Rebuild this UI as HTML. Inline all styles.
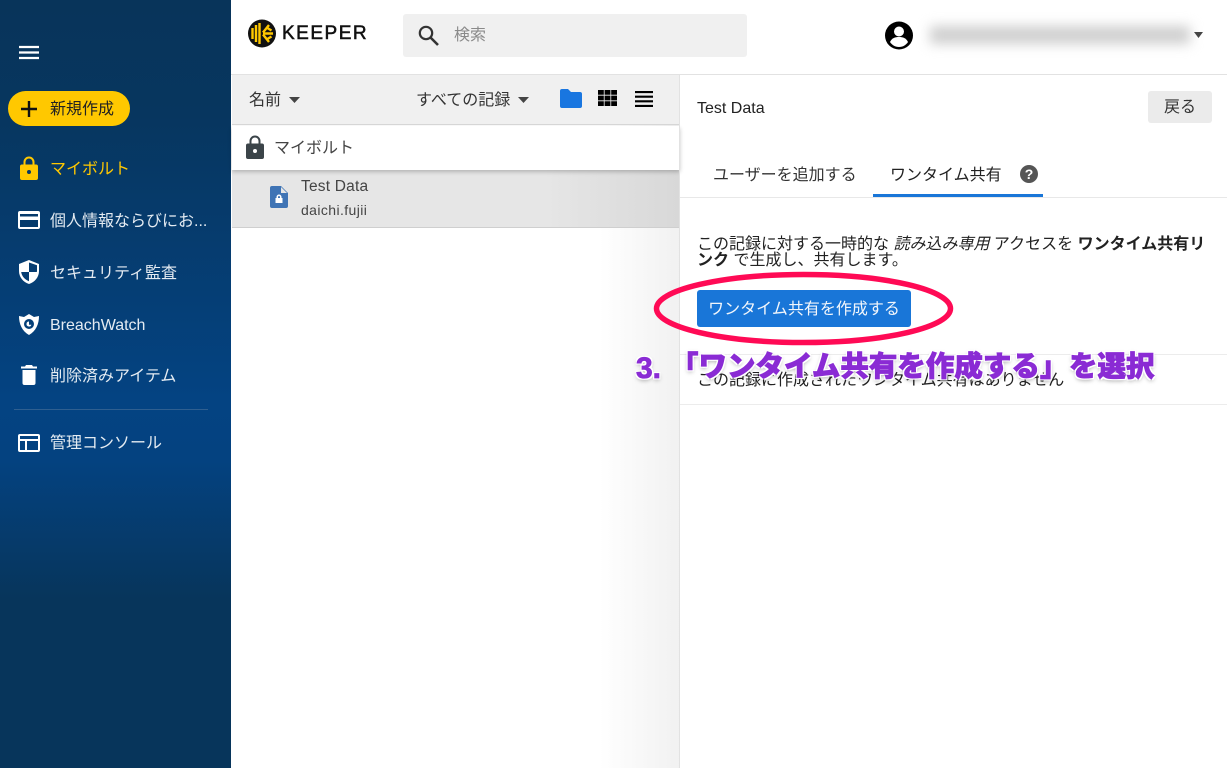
<!DOCTYPE html>
<html lang="ja"><head><meta charset="utf-8"><title>Keeper</title>
<style>
*{box-sizing:border-box}
html,body{margin:0;padding:0;width:1227px;height:768px;overflow:hidden;background:#fff}
body{font-family:"Liberation Sans","Noto Sans CJK JP",sans-serif;position:relative;color:#222}
.a{position:absolute;white-space:nowrap;line-height:1}
svg{position:absolute;display:block}
#side{position:absolute;left:0;top:0;width:231px;height:768px;background:linear-gradient(180deg,#08345a 0,#07365f 15%,#044382 52%,#044280 60%,#07355b 78%,#07355b 100%)}
.nav{color:#e4ebf2;font-size:16px;left:50px}
.ann{font-family:"Liberation Sans","Noto Sans CJK JP",sans-serif;font-weight:900;color:#8a2bd4;font-size:28.500px;-webkit-text-stroke:.8px #8a2bd4;text-shadow:0 0 1px #fff,1.500px 1.500px 0 #fff,-1.500px -1.500px 0 #fff,1.500px -1.500px 0 #fff,-1.500px 1.500px 0 #fff,0 2px 5px rgba(0,0,0,.4)}
</style></head><body>

<div id="side"></div>
<svg style="left:18px;top:45px" width="22" height="15"><path d="M1 2h20M1 7.500h20M1 13h20" stroke="#fff" stroke-width="2.300"/></svg>
<div class="a" style="left:8px;top:91px;width:122px;height:35px;border-radius:18px;background:#ffc800"></div>
<svg style="left:20px;top:100px" width="18" height="18"><path d="M9 1v16M1 9h16" stroke="#111" stroke-width="2.400"/></svg>
<div class="a" style="left:50px;top:102px;font-size:16px;color:#222">新規作成</div>

<svg style="left:20px;top:156px" width="18" height="24" viewBox="0 0 18 24"><path fill="#ffc800" fill-rule="evenodd" d="M3.500 8.500V6a5.500 5.500 0 0 1 11 0v2.500H16a2 2 0 0 1 2 2V22a2 2 0 0 1-2 2H2a2 2 0 0 1-2-2V10.500a2 2 0 0 1 2-2zM5.500 8.500h7V6a3.500 3.500 0 0 0-7 0zM9 14a2 2 0 1 0 0 4 2 2 0 0 0 0-4z"/></svg>
<div class="a nav" style="top:162px;color:#ffc800">マイボルト</div>

<svg style="left:18px;top:211px" width="22" height="18" viewBox="0 0 22 18"><path fill="#fff" fill-rule="evenodd" d="M2 0h18a2 2 0 0 1 2 2v14a2 2 0 0 1-2 2H2a2 2 0 0 1-2-2V2a2 2 0 0 1 2-2zM2 3v2.500h18V3zM2 9v7h18V9z"/></svg>
<div class="a nav" style="top:214px">個人情報ならびにお...</div>

<svg style="left:19px;top:260px" width="20" height="24" viewBox="0 0 20 24"><path fill="#fff" fill-rule="evenodd" d="M10 0l10 4v7c0 6-4 11-10 13C4 22 0 17 0 11V4zM10 2.500V12H2.200c.5 4 3.500 7.500 7.800 9.300V12h7.800c.1-.4.200-.7.200-1V5.300z"/></svg>
<div class="a nav" style="top:266px">セキュリティ監査</div>

<svg style="left:19px;top:313px" width="20" height="22" viewBox="0 0 20 22"><path fill="#fff" fill-rule="evenodd" d="M0 3l5 1 5-3 5 3 5-1c0 8-3 15-10 19C3 18 0 11 0 3zM10 6a5 5 0 1 0 0 10 5 5 0 0 0 0-10z"/><path fill="#fff" d="M10 8.500a2.500 2.500 0 1 0 2.400 3.200H10z"/></svg>
<div class="a nav" style="top:318px">BreachWatch</div>

<svg style="left:21px;top:365px" width="16" height="20" viewBox="0 0 16 20"><path fill="#fff" d="M5 0h6l1 1.500h4v2H0v-2h4zM1.500 5h13v13a2 2 0 0 1-2 2h-9a2 2 0 0 1-2-2z"/></svg>
<div class="a nav" style="top:369px">削除済みアイテム</div>

<div class="a" style="left:14px;top:409px;width:194px;height:1px;background:#2f5f90"></div>

<svg style="left:18px;top:434px" width="22" height="18" viewBox="0 0 22 18"><path fill="none" stroke="#fff" stroke-width="2" d="M2 1h18a1 1 0 0 1 1 1v14a1 1 0 0 1-1 1H2a1 1 0 0 1-1-1V2a1 1 0 0 1 1-1zM1 6h20M8 6v11"/></svg>
<div class="a nav" style="top:436px">管理コンソール</div>

<!-- Header -->
<div class="a" style="left:231px;top:74px;width:996px;height:1px;background:#e2e2e2"></div>
<svg style="left:248px;top:19px" width="28" height="29" viewBox="0 0 28 29"><circle cx="14" cy="14.500" r="14" fill="#111"/><g fill="none" stroke="#ffc800" stroke-width="2.400"><path d="M4.500 9v11M8 6v17M11.500 4v21"/><path d="M15 13.500L21 6M15 15.500l6 7.500M15 14.500h10M18.500 8.500l5 3M18.500 20.500l5-3"/></g></svg>
<div class="a" style="left:282px;top:24px;font-size:19px;letter-spacing:1.500px;color:#111;-webkit-text-stroke:.55px #111">KEEPER</div>
<div class="a" style="left:403px;top:14px;width:344px;height:43px;background:#f0f0f0;border-radius:3px"></div>
<svg style="left:417px;top:24px" width="23" height="23" viewBox="0 0 23 23"><circle cx="9" cy="9" r="6.200" fill="none" stroke="#333" stroke-width="2.200"/><path d="M13.500 13.500l7.500 7.500" stroke="#333" stroke-width="2.600"/></svg>
<div class="a" style="left:454px;top:28px;font-size:16px;color:#8a8a8a">検索</div>
<svg style="left:885px;top:21px" width="28" height="29" viewBox="0 0 28 29"><circle cx="14" cy="14.500" r="14" fill="#000"/><circle cx="14" cy="10.500" r="5" fill="#fff"/><path d="M5 21c2-4 5-5 9-5s7 1 9 5c-2 3-5 5-9 5s-7-2-9-5z" fill="#fff"/></svg>
<div class="a" style="left:930px;top:26px;width:260px;height:18px;background:#cfcfcf;filter:blur(6px)"></div>
<svg style="left:1194px;top:32px" width="9" height="6"><path d="M0 0h9L4.500 6z" fill="#444"/></svg>

<!-- List panel -->
<div class="a" style="left:232px;top:75px;width:448px;height:693px;background:linear-gradient(90deg,#fff 0,#fff 82%,#f1f1f1 100%)"></div>
<div class="a" style="left:232px;top:75px;width:448px;height:50px;background:#f0f0f0;border-bottom:1px solid #d8d8d8"></div>
<div class="a" style="left:249px;top:93px;font-size:16px;color:#333">名前</div>
<svg style="left:289px;top:97px" width="11" height="6"><path d="M0 0h11L5.500 6z" fill="#444"/></svg>
<div class="a" style="left:416px;top:93px;font-size:16px;color:#333">すべての記録</div>
<svg style="left:518px;top:97px" width="11" height="6"><path d="M0 0h11L5.500 6z" fill="#444"/></svg>
<svg style="left:560px;top:89px" width="22" height="19" viewBox="0 0 22 19"><path fill="#1976e0" d="M2 0h6l3 3h9a2 2 0 0 1 2 2v12a2 2 0 0 1-2 2H2a2 2 0 0 1-2-2V2a2 2 0 0 1 2-2z"/></svg>
<svg style="left:598px;top:90px" width="19" height="16" viewBox="0 0 19 16"><path fill="#000" d="M0 0h5.800v4.800H0zM6.600 0h5.800v4.800H6.600zM13.200 0H19v4.800h-5.800zM0 5.600h5.800v4.800H0zM6.600 5.600h5.800v4.800H6.600zM13.200 5.600H19v4.800h-5.800zM0 11.200h5.800V16H0zM6.600 11.200h5.800V16H6.600zM13.200 11.200H19V16h-5.800z"/></svg>
<svg style="left:635px;top:91px" width="18" height="16"><path d="M0 1h18M0 5.700h18M0 10.300h18M0 15h18" stroke="#000" stroke-width="2.200"/></svg>

<div class="a" style="left:232px;top:170px;width:448px;height:58px;background:linear-gradient(90deg,#e6e6e6 0,#e6e6e6 70%,#d8d8d8 100%);border-bottom:1px solid #cfcfcf"></div>
<div class="a" style="left:232px;top:126px;width:448px;height:44px;background:#fff;box-shadow:0 2px 4px rgba(0,0,0,.22)"></div>
<svg style="left:246px;top:135px" width="18" height="24" viewBox="0 0 18 24"><path fill="#3b4449" fill-rule="evenodd" d="M3.500 8.500V6a5.500 5.500 0 0 1 11 0v2.500H16a2 2 0 0 1 2 2V22a2 2 0 0 1-2 2H2a2 2 0 0 1-2-2V10.500a2 2 0 0 1 2-2zM5.500 8.500h7V6a3.500 3.500 0 0 0-7 0zM9 14a2 2 0 1 0 0 4 2 2 0 0 0 0-4z"/></svg>
<div class="a" style="left:274px;top:141px;font-size:16px;color:#444">マイボルト</div>
<svg style="left:270px;top:186px" width="18" height="22" viewBox="0 0 18 22"><path fill="#3f74b5" d="M2 0h9l7 7v13a2 2 0 0 1-2 2H2a2 2 0 0 1-2-2V2a2 2 0 0 1 2-2z"/><path fill="#e6e6e6" d="M11 1l6 6h-6z"/><path fill="#fff" fill-rule="evenodd" d="M6.500 12v-1a2.500 2.500 0 0 1 5 0v1h1v5h-7v-5zM8 12h2v-1a1 1 0 0 0-2 0z"/></svg>
<div class="a" style="left:301px;top:179px;font-size:15.500px;color:#444;letter-spacing:.2px">Test Data</div>
<div class="a" style="left:301px;top:203px;font-size:14px;color:#444;letter-spacing:.4px">daichi.fujii</div>

<!-- Detail panel -->
<div class="a" style="left:679px;top:75px;width:1px;height:693px;background:#e2e2e2"></div>
<div class="a" style="left:697px;top:101px;font-size:16px;color:#222">Test Data</div>
<div class="a" style="left:1148px;top:91px;width:64px;height:32px;background:#ebebeb;border-radius:3px;text-align:center;line-height:34px;font-size:16px;color:#333">戻る</div>
<div class="a" style="left:713px;top:168px;font-size:16px;color:#333">ユーザーを追加する</div>
<div class="a" style="left:890px;top:168px;font-size:16px;color:#222">ワンタイム共有</div>
<svg style="left:1020px;top:165px" width="18" height="18" viewBox="0 0 18 18"><circle cx="9" cy="9" r="9" fill="#555"/><text x="9" y="14" font-size="14" font-weight="bold" fill="#fff" text-anchor="middle" font-family="Liberation Sans">?</text></svg>
<div class="a" style="left:680px;top:197px;width:547px;height:1px;background:#e8e8e8"></div>
<div class="a" style="left:873px;top:194px;width:170px;height:3px;background:#1976d8"></div>

<div class="a" style="left:697px;top:237px;font-size:16px;color:#222">この記録に対する一時的な <i>読み込み専用</i> アクセスを <b>ワンタイム共有リ</b></div>
<div class="a" style="left:697px;top:253px;font-size:16px;color:#222"><b>ンク</b> で生成し、共有します。</div>

<div class="a" style="left:697px;top:290px;width:214px;height:37px;background:#1976d8;border-radius:3px;color:#f2f6fb;font-size:16px;line-height:39px;text-align:center">ワンタイム共有を作成する</div>
<div class="a" style="left:680px;top:354px;width:547px;height:1px;background:#ececec"></div>
<div class="a" style="left:697px;top:373px;font-size:16px;color:#222">この記録に作成されたワンタイム共有はありません</div>
<div class="a" style="left:680px;top:404px;width:547px;height:1px;background:#ececec"></div>

<!-- Annotation -->
<svg style="left:650px;top:268px" width="310" height="82" viewBox="0 0 310 82"><ellipse cx="153.500" cy="40.500" rx="147" ry="34" fill="none" stroke="#ff0a55" stroke-width="5.500"/></svg>
<div class="a ann" style="left:636px;top:354px;font-size:30px">3.</div>
<div class="a ann" style="left:670px;top:353px">「ワンタイム共有を作成する」</div>
<div class="a ann" style="left:1069px;top:353px">を選択</div>

</body></html>
